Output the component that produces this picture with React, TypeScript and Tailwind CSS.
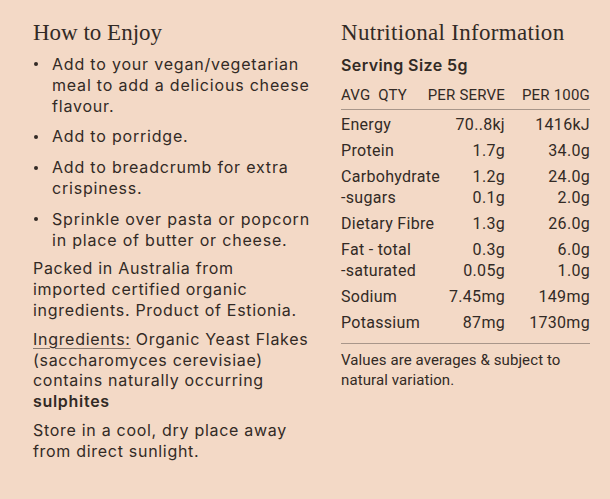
import React from "react";

// nutrition panel rows: groups are separated by a little extra space
const NUTRITION: { label: string; serve: string; per100: string }[][] = [
  [{ label: "Energy", serve: "70..8kj", per100: "1416kJ" }],
  [{ label: "Protein", serve: "1.7g", per100: "34.0g" }],
  [
    { label: "Carbohydrate", serve: "1.2g", per100: "24.0g" },
    { label: "-sugars", serve: "0.1g", per100: "2.0g" },
  ],
  [{ label: "Dietary Fibre", serve: "1.3g", per100: "26.0g" }],
  [
    { label: "Fat - total", serve: "0.3g", per100: "6.0g" },
    { label: "-saturated", serve: "0.05g", per100: "1.0g" },
  ],
  [{ label: "Sodium", serve: "7.45mg", per100: "149mg" }],
  [{ label: "Potassium", serve: "87mg", per100: "1730mg" }],
];

// line breaks follow the printed label
const TIPS: React.ReactNode[] = [
  <>Add to your vegan/vegetarian<br />meal to add a delicious cheese<br />flavour.</>,
  <>Add to porridge.</>,
  <>Add to breadcrumb for extra<br />crispiness.</>,
  <>Sprinkle over pasta or popcorn<br />in place of butter or cheese.</>,
];

export default function App() {
  return (
    <div className="min-h-screen bg-[#f3d9c6] text-[#322a25]">
      <div className="flex gap-[23px] px-[33px] pt-[19px]">
        {/* How to Enjoy */}
        <section className="w-[285px] shrink-0 whitespace-nowrap font-['Inter',sans-serif] text-[16px] leading-[20.8px] tracking-[0.7px]">
          <h2 className="font-['Liberation_Serif',serif] text-[23px] leading-[28px] font-normal tracking-[0px]">
            How to Enjoy
          </h2>
          <ul className="mt-[7px] space-y-[10px] tracking-[0.8px]">
            {TIPS.map((tip, i) => (
              <li key={i} className="flex">
                <span className="flex h-[20.8px] w-[19px] shrink-0 items-center">
                  <span className="ml-[1px] size-[4px] rounded-full bg-[#322a25]" />
                </span>
                <span>{tip}</span>
              </li>
            ))}
          </ul>
          <p className="mt-[8px]">
            Packed in Australia from
            <br />
            imported certified organic
            <br />
            ingredients. Product of Estionia.
          </p>
          <p className="mt-[8px]">
            <span className="underline decoration-[#8a7b70] decoration-1 underline-offset-[3px]">
              Ingredients:
            </span>{" "}
            Organic Yeast Flakes
            <br />
            (saccharomyces cerevisiae)
            <br />
            contains naturally occurring
            <br />
            <strong className="font-semibold">sulphites</strong>
          </p>
          <p className="mt-[8px]">
            Store in a cool, dry place away
            <br />
            from direct sunlight.
          </p>
        </section>

        {/* Nutritional Information */}
        <section className="w-[249px] shrink-0">
          <h2 className="font-['Liberation_Serif',serif] text-[23px] leading-[28px] font-normal tracking-[0.3px]">
            Nutritional Information
          </h2>
          <p className="mt-[6px] font-['Inter',sans-serif] text-[16px] leading-[24px] font-semibold tracking-[0.4px]">
            Serving Size 5g
          </p>

          <div className="font-['Roboto',sans-serif] text-[16px] leading-[21px] tracking-[0.3px]">
            <div className="mt-[8px] flex border-b border-[#a8968a] pb-[3px] text-[15px] uppercase tracking-[0.2px]">
              <span className="min-w-0 flex-1 whitespace-pre">AVG  QTY</span>
              <span className="w-[80px] text-right">Per Serve</span>
              <span className="w-[85px] text-right">Per 100g</span>
            </div>

            <div className="space-y-[5px] border-b border-[#a8968a] pt-[4px] pb-[10px]">
              {NUTRITION.map((group, i) => (
                <div key={i}>
                  {group.map((row) => (
                    <div key={row.label} className="flex">
                      <span className="min-w-0 flex-1 whitespace-nowrap">{row.label}</span>
                      <span className="w-[80px] text-right">{row.serve}</span>
                      <span className="w-[85px] text-right">{row.per100}</span>
                    </div>
                  ))}
                </div>
              ))}
            </div>

            <p className="pt-[6px] text-[15px] leading-[20px] tracking-[0.1px]">
              Values are averages &amp; subject to
              <br />
              natural variation.
            </p>
          </div>
        </section>
      </div>
    </div>
  );
}
